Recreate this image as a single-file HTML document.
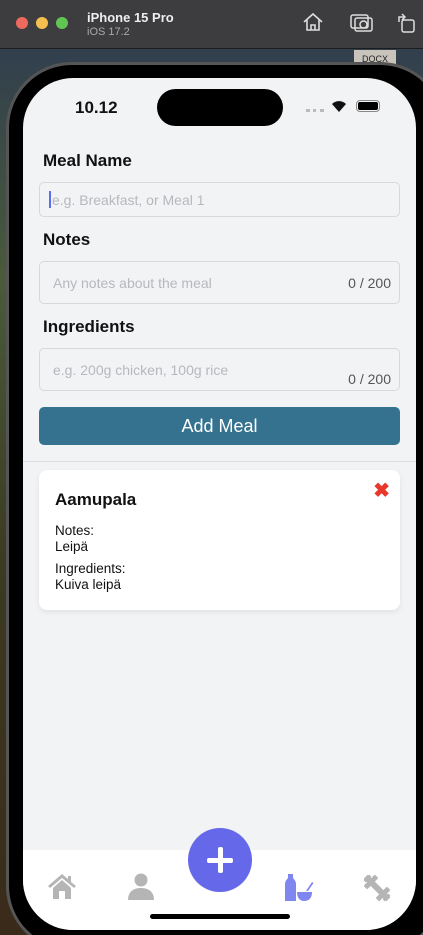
<!DOCTYPE html>
<html><head><meta charset="utf-8"><style>
*{margin:0;padding:0;box-sizing:border-box}
html,body{width:423px;height:935px;overflow:hidden}
body{position:relative;font-family:"Liberation Sans",sans-serif;background:linear-gradient(180deg,#2c3a52 0%,#4a5a3a 30%,#3b3a22 60%,#3a2a1a 100%)}
.tb{position:absolute;left:0;top:0;width:423px;height:49px;background:#3d3d3f;border-bottom:1px solid #1c1c1c}
.dot{position:absolute;top:17px;width:12px;height:12px;border-radius:50%}
.frame{position:absolute;left:6px;top:62px;width:440px;height:890px;border-radius:66px;background:#000;border:3px solid #555}
.screen{position:absolute;left:23px;top:78px;width:393px;height:852px;border-radius:50px;background:#f2f3f5;overflow:hidden}
.lbl{position:absolute;left:20px;font-weight:bold;font-size:17px;color:#111}
.inp{position:absolute;left:16px;width:361px;border:1px solid #d6d8dc;border-radius:5px;background:#f2f3f5;color:#b5b8bd;font-size:14px}
.cnt{position:absolute;right:8px;color:#555;font-size:14px}
</style></head><body>
<div class="tb">
<div class="dot" style="left:16px;background:#ee6a5e"></div>
<div class="dot" style="left:36px;background:#f5bf4f"></div>
<div class="dot" style="left:56px;background:#61c554"></div>
<div style="position:absolute;left:87px;top:10px;color:#eee;font-weight:bold;font-size:13px">iPhone 15 Pro</div>
<div style="position:absolute;left:87px;top:26px;color:#aaa;font-size:11px">iOS 17.2</div>
<svg style="position:absolute;left:302px;top:12px" width="22" height="20" viewBox="0 0 22 20" fill="none" stroke="#ddd" stroke-width="1.6"><path d="M2 10 L11 2 L20 10 M5 8 V18 H17 V8 M9 18 V13 H13 V18"/></svg>
<svg style="position:absolute;left:350px;top:13px" width="24" height="20" viewBox="0 0 24 20" fill="none" stroke="#ddd" stroke-width="1.5"><rect x="1" y="2" width="17" height="13" rx="2"/><rect x="5" y="5" width="17" height="13" rx="2"/><circle cx="13.5" cy="11.5" r="3.5"/></svg>
<svg style="position:absolute;left:396px;top:12px" width="20" height="22" viewBox="0 0 20 22" fill="none" stroke="#ddd" stroke-width="1.5"><rect x="6" y="8" width="12" height="12" rx="2"/><path d="M3 10 V5 H9 M6 2 L9 5 L6 8"/></svg>
</div>
<div style="position:absolute;left:354px;top:50px;width:42px;height:18px;background:#c8c4bc;font-size:9px;color:#222;text-align:center;padding-top:4px">DOCX</div>
<div class="frame"></div>
<div class="screen">
<div style="position:absolute;left:52px;top:20px;font-weight:bold;font-size:17px;color:#111">10.12</div>
<div style="position:absolute;left:134px;top:11px;width:126px;height:37px;border-radius:19px;background:#000"></div>
<div style="position:absolute;left:283px;top:31px;width:18px;height:3px;border-top:3px dotted #bbb"></div>
<svg style="position:absolute;left:308px;top:22px" width="16" height="12" viewBox="0 0 16 12"><path d="M8 12 L1 4 A10 10 0 0 1 15 4 Z" fill="#111"/></svg>
<div style="position:absolute;left:333px;top:22px;width:24px;height:12px;border:1.5px solid #888;border-radius:4px;padding:1px"><div style="width:100%;height:100%;background:#000;border-radius:2px"></div></div>
<div class="lbl" style="top:73px">Meal Name</div>
<div class="inp" style="top:104px;height:35px;padding:9px 12px"><span style="position:absolute;left:9px;top:8px;width:2px;height:17px;background:#5b6ef0"></span>e.g. Breakfast, or Meal 1</div>
<div class="lbl" style="top:152px">Notes</div>
<div class="inp" style="top:183px;height:43px;padding:13px 13px">Any notes about the meal<span class="cnt" style="top:13px">0 / 200</span></div>
<div class="lbl" style="top:239px">Ingredients</div>
<div class="inp" style="top:270px;height:43px;padding:13px 13px">e.g. 200g chicken, 100g rice<span class="cnt" style="top:22px">0 / 200</span></div>
<div style="position:absolute;left:16px;top:329px;width:361px;height:38px;border-radius:5px;background:#35728f;color:#fff;font-size:18px;text-align:center;line-height:38px">Add Meal</div>
<div style="position:absolute;left:0;top:383px;width:393px;height:1px;background:#dcdde0"></div>
<div style="position:absolute;left:16px;top:392px;width:361px;height:140px;border-radius:8px;background:#fff;box-shadow:0 2px 6px rgba(0,0,0,.08)">
<div style="position:absolute;left:16px;top:20px;font-weight:bold;font-size:17px;color:#111">Aamupala</div>
<div style="position:absolute;right:10px;top:8px;color:#e8382d;font-size:20px;font-weight:bold">✖</div>
<div style="position:absolute;left:16px;top:53px;font-size:13.5px;color:#111;line-height:16px">Notes:<br>Leipä</div>
<div style="position:absolute;left:16px;top:91px;font-size:13.5px;color:#111;line-height:16px">Ingredients:<br>Kuiva leipä</div>
</div>
<div style="position:absolute;left:0;top:772px;width:393px;height:80px;background:#fff"></div>
<div style="position:absolute;left:165px;top:750px;width:64px;height:64px;border-radius:50%;background:#6569e9"><div style="position:absolute;left:19px;top:30px;width:26px;height:5px;background:#fff;border-radius:2px"></div><div style="position:absolute;left:30px;top:19px;width:5px;height:26px;background:#fff;border-radius:2px"></div></div>
<svg style="position:absolute;left:24px;top:794px" width="30" height="28" viewBox="0 0 30 28" fill="#b5b5b5"><path d="M15 2 L1 14 L3 16 L15 6 L27 16 L29 14 L24 10 V4 H21 V7 Z M6 16 V27 H12 V19 H18 V27 H24 V16 L15 8 Z"/></svg>
<svg style="position:absolute;left:104px;top:794px" width="28" height="28" viewBox="0 0 28 28" fill="#b5b5b5"><circle cx="14" cy="8" r="6.5"/><path d="M1 28 C1 20 6 16 14 16 C22 16 27 20 27 28 Z"/></svg>
<svg style="position:absolute;left:261px;top:796px" width="30" height="28" viewBox="0 0 30 28" fill="#7f86f0"><path d="M4 0 H9 V4 C11 6 12 8 12 10 V27 H1 V10 C1 8 2 6 4 4 Z"/><path d="M13 18 H28 C28 24 25 27 20 27 C16 27 13 24 13 18 Z"/><path d="M22 17 L28 8 L29.5 9 L24 17 Z"/></svg>
<svg style="position:absolute;left:340px;top:796px" width="28" height="28" viewBox="0 0 28 28" fill="#b5b5b5"><g transform="rotate(45 14 14)"><rect x="11" y="-2" width="6" height="32" rx="1" transform="rotate(-90 14 14)"/><rect x="3" y="6" width="5" height="16" rx="1"/><rect x="20" y="6" width="5" height="16" rx="1"/><rect x="-1" y="10" width="3" height="8"/><rect x="26" y="10" width="3" height="8"/></g></svg>
<div style="position:absolute;left:127px;top:836px;width:140px;height:5px;border-radius:3px;background:#000"></div>
</div>
</body></html>
